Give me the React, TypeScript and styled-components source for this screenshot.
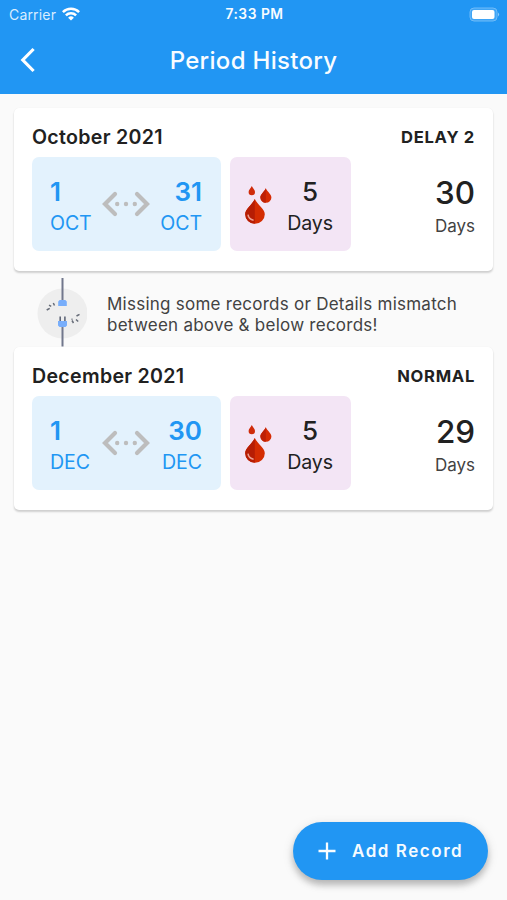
import React from "react";
import styled, { createGlobalStyle } from "styled-components";

const GlobalStyle = createGlobalStyle`
  * { box-sizing: border-box; }
  body {
    margin: 0;
    background: #fafafa;
    color: #212121;
    font-family: Inter, Roboto, "Liberation Sans", sans-serif;
  }
`;

const Screen = styled.div`
  height: 900px;
  display: flex;
  flex-direction: column;
  overflow: hidden;
`;

const Header = styled.header`
  height: 94px;
  flex: none;
  background: #2196f3;
  color: #f8fcff;
`;

const StatusBar = styled.div`
  height: 27px;
  padding: 0 7px 0 9px;
  display: grid;
  grid-template-columns: 1fr auto 1fr;
  align-items: center;
  font-size: 14px;
  line-height: 27px;
`;

const Carrier = styled.div`
  display: flex;
  align-items: center;
  gap: 6px;
  letter-spacing: 0.17px;
  color: #d9edff;
`;

const Time = styled.div`
  padding-top: 1px;
  font-size: 13.8px;
  font-weight: 600;
  letter-spacing: 0.5px;
`;

const Battery = styled.svg`
  justify-self: end;
`;

const TitleBar = styled.div`
  height: 66px;
  padding: 0 20px;
  display: grid;
  grid-template-columns: 30px 1fr 30px;
  align-items: center;
`;

const Title = styled.h1`
  margin: 0;
  padding-top: 1px;
  text-align: center;
  font-size: 24px;
  font-weight: 500;
  line-height: 30px;
  letter-spacing: 0.3px;
  white-space: nowrap;
`;

const BackButton = styled.button`
  padding: 0;
  border: 0;
  background: none;
  display: flex;
`;

const List = styled.main`
  flex: 1;
  padding: 14px 14px 0;
`;

const Card = styled.section`
  height: 163px;
  padding: 18px 18px 0;
  border-radius: 5px;
  background: #fff;
  box-shadow: 0 2px 2px rgba(0, 0, 0, 0.17), 0 0 1px rgba(0, 0, 0, 0.08);
`;

const CardHeader = styled.div`
  height: 31px;
  display: flex;
  justify-content: space-between;
  line-height: 22px;
`;

const Month = styled.div`
  font-size: 19.6px;
  font-weight: 600;
  letter-spacing: 0.3px;
`;

const Status = styled.div`
  font-size: 16.6px;
  font-weight: 700;
  letter-spacing: 0.7px;
`;

const CardBody = styled.div`
  display: flex;
  justify-content: space-between;
`;

const Boxes = styled.div`
  display: flex;
  gap: 9px;
`;

const RangeBox = styled.div`
  width: 189px;
  height: 94px;
  padding: 19px 19px 0 18px;
  border-radius: 7px;
  background: #e3f2fd;
  color: #2196f3;
  display: flex;
  justify-content: space-between;
`;

const FlowBox = styled.div`
  width: 121px;
  height: 94px;
  padding: 19px 18px 0 14px;
  border-radius: 7px;
  background: #f3e5f5;
  display: flex;
  justify-content: space-between;
`;

const Stack = styled.div<{ $align: "left" | "center" | "right" }>`
  text-align: ${(p) => p.$align};
`;

const Day = styled.div<{ $weight: number }>`
  font-size: 26px;
  font-weight: ${(p) => p.$weight};
  line-height: 32px;
`;

const Unit = styled.div`
  font-size: 19.6px;
  line-height: 30px;
  letter-spacing: -0.1px;
`;

const Total = styled.div`
  padding-top: 20px;
  text-align: right;
`;

const TotalNumber = styled.div`
  font-size: 31.4px;
  font-weight: 500;
  line-height: 33px;
`;

const TotalUnit = styled.div`
  font-size: 17px;
  line-height: 32px;
  color: #424242;
`;

const Notice = styled.div`
  height: 76px;
  padding: 7px 0 0 22px;
  display: flex;
  gap: 20px;
`;

const NoticeText = styled.p`
  margin: 16px 0 0;
  width: 370px;
  font-size: 17px;
  line-height: 21px;
  letter-spacing: 0.25px;
  color: #424242;
`;

const AddButton = styled.button`
  align-self: flex-end;
  flex: none;
  width: 195px;
  height: 58px;
  margin: 0 19px 20px 0;
  padding: 0 0 0 25px;
  border: 0;
  border-radius: 29px;
  background: #2196f3;
  color: #f5fbff;
  display: flex;
  align-items: center;
  gap: 16px;
  font-family: inherit;
  font-size: 17px;
  font-weight: 600;
  letter-spacing: 1.55px;
  white-space: nowrap;
  box-shadow: 0 5px 6px rgba(0, 0, 0, 0.2), 0 3px 12px rgba(0, 0, 0, 0.12);
`;

const WifiIcon = () => (
  <svg width="18" height="14" viewBox="0 0 18 14" fill="none" stroke="#fff" strokeWidth="2.5">
    <path d="M0.9 5.100a11.500 11.500 0 0 1 16.200 0" />
    <path d="M3.900 8.400a7.200 7.200 0 0 1 10.200 0" />
    <path d="M9 13.600 6.100 10.700a4.100 4.100 0 0 1 5.800 0Z" fill="#fff" stroke="none" />
  </svg>
);

const BatteryIcon = () => (
  <Battery width="31" height="15" viewBox="0 0 31 15">
    <rect x="1" y="1" width="27" height="13" rx="4" fill="#3fa5f6" stroke="#6fbbf8" />
    <rect x="3" y="3" width="22.500" height="9" rx="2" fill="#fff" />
    <path d="M29 5.500q2.200 2 0 4Z" fill="#8dc9fa" />
  </Battery>
);

const BackIcon = () => (
  <svg width="16" height="26" viewBox="0 0 16 26" fill="none" stroke="#fff" strokeWidth="3.200">
    <path d="M13.600 2 2.800 13l10.800 11" />
  </svg>
);

const RangeArrow = styled.svg`
  margin: 15px -2px 0 -2px;
`;

const RangeIcon = () => (
  <RangeArrow
    width="48"
    height="26"
    viewBox="0 0 48 26"
    fill="none"
    stroke="#bdbdbd"
    strokeWidth="4.200"
    strokeLinecap="round"
  >
    <path d="M13 3 3 13l10 10M35 3 45 13 35 23" />
    <g fill="#bdbdbd" stroke="none">
      <circle cx="15.200" cy="13" r="2.200" />
      <circle cx="24" cy="13" r="2.200" />
      <circle cx="32.800" cy="13" r="2.200" />
    </g>
  </RangeArrow>
);

const Drops = styled.svg`
  margin-top: 9px;
`;

const DropsIcon = () => (
  <Drops width="28" height="40" viewBox="0 0 28 40">
    <path d="M7.800 1C6.500 3.500 4.600 5 4.600 7a3.200 3.200 0 0 0 6.400 0C11 5 9.100 3.500 7.800 1Z" fill="#cf2b0a" />
    <path d="M21.800 3.300C19.900 7.400 16.400 9.300 16.400 12.500a5.500 5.200 0 0 0 11 0C27.400 9.300 23.800 7.400 21.800 3.300Z" fill="#d62b03" />
    <path d="M21.800 3.300C19.900 7.400 16.400 9.300 16.400 12.500a5.500 5.200 0 0 0 5.400 5.200Z" fill="#bd2005" />
    <path d="M10.800 14C7.800 20.500 1.200 23.800 1.200 29.300a9.800 9.400 0 0 0 19.600 0C20.800 23.800 13.900 20.500 10.800 14Z" fill="#d42c02" />
    <path d="M10.800 14C7.800 20.500 1.200 23.800 1.200 29.300a9.800 9.400 0 0 0 9.600 9.400Z" fill="#b61d04" />
    <path d="M4 29.700q.7 4.800 5.600 5.500" fill="none" stroke="#eda093" strokeWidth="1.500" />
  </Drops>
);

const DisconnectedIcon = () => (
  <svg width="51" height="69" viewBox="0 0 51 69">
    <circle cx="26.500" cy="35.500" r="25" fill="#eeeeee" />
    <path d="M26.500 0v22M26.500 48v20.500" stroke="#71778c" strokeWidth="2" />
    <path d="M22.200 28v-4.500l1.500-1.500h5.600l1.500 1.500v4.500ZM22 43h9v4.500l-1.500 1.500h-6l-1.500-1.500Z" fill="#78aefb" />
    <path d="M24.200 38.500v4.500M28.900 38.500v4.500" stroke="#606779" strokeWidth="1.600" />
    <path
      d="m10.700 32 3-1.700M13 27.200l2.200 1.200M17.300 25l1.200 2.500M36 42.500l1.500 2.500M40 41.500l2.200 2M35.500 41.200l1 0M40.500 38l3-1.700"
      stroke="#666c78"
      strokeWidth="1.500"
    />
  </svg>
);

const PlusIcon = () => (
  <svg width="18" height="18" viewBox="0 0 18 18" stroke="#f8fcff" strokeWidth="2.300">
    <path d="M9 .5v17M.5 9h17" />
  </svg>
);

interface RecordData {
  month: string;
  status: string;
  abbr: string;
  start: number;
  end: number;
  flow: number;
  total: number;
}

const october: RecordData = { month: "October 2021", status: "DELAY 2", abbr: "OCT", start: 1, end: 31, flow: 5, total: 30 };
const december: RecordData = { month: "December 2021", status: "NORMAL", abbr: "DEC", start: 1, end: 30, flow: 5, total: 29 };

const RecordCard = ({ record }: { record: RecordData }) => (
  <Card>
    <CardHeader>
      <Month>{record.month}</Month>
      <Status>{record.status}</Status>
    </CardHeader>
    <CardBody>
      <Boxes>
        <RangeBox>
          <Stack $align="left">
            <Day $weight={600}>{record.start}</Day>
            <Unit>{record.abbr}</Unit>
          </Stack>
          <RangeIcon />
          <Stack $align="right">
            <Day $weight={600}>{record.end}</Day>
            <Unit>{record.abbr}</Unit>
          </Stack>
        </RangeBox>
        <FlowBox>
          <DropsIcon />
          <Stack $align="center">
            <Day $weight={500}>{record.flow}</Day>
            <Unit>Days</Unit>
          </Stack>
        </FlowBox>
      </Boxes>
      <Total>
        <TotalNumber>{record.total}</TotalNumber>
        <TotalUnit>Days</TotalUnit>
      </Total>
    </CardBody>
  </Card>
);

export default function App() {
  return (
    <Screen>
      <GlobalStyle />
      <Header>
        <StatusBar>
          <Carrier>
            Carrier
            <WifiIcon />
          </Carrier>
          <Time>7:33 PM</Time>
          <BatteryIcon />
        </StatusBar>
        <TitleBar>
          <BackButton aria-label="Back">
            <BackIcon />
          </BackButton>
          <Title>Period History</Title>
        </TitleBar>
      </Header>
      <List>
        <RecordCard record={october} />
        <Notice>
          <DisconnectedIcon />
          <NoticeText>Missing some records or Details mismatch between above &amp; below records!</NoticeText>
        </Notice>
        <RecordCard record={december} />
      </List>
      <AddButton>
        <PlusIcon />
        Add Record
      </AddButton>
    </Screen>
  );
}
